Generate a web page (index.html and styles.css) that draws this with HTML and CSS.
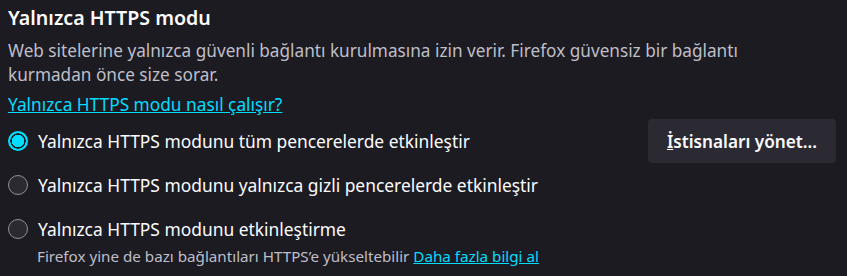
FILE: index.html
```html
<!DOCTYPE html>
<html lang="tr">
  <head>
    <meta charset="UTF-8" />
    <title>Yalnızca HTTPS modu</title>
    <link rel="stylesheet" href="styles.css">
  </head>
  <body>
    <section class="pane">
      <h2 class="title">Yalnızca HTTPS modu</h2>
      <p class="desc">Web sitelerine yalnızca güvenli bağlantı kurulmasına izin verir. Firefox güvensiz bir bağlantı kurmadan önce size sorar.</p>
      <a class="link more" href="#">Yalnızca HTTPS modu nasıl çalışır?</a>

      <div class="options">
        <div class="row">
          <label class="radio">
            <span class="dot checked"></span>
            Yalnızca HTTPS modunu tüm pencerelerde etkinleştir
          </label>
          <button class="btn"><u>İ</u>stisnaları yönet...</button>
        </div>
        <div class="row">
          <label class="radio">
            <span class="dot"></span>
            Yalnızca HTTPS modunu yalnızca gizli pencerelerde etkinleştir
          </label>
        </div>
        <div class="row">
          <label class="radio">
            <span class="dot"></span>
            Yalnızca HTTPS modunu etkinleştirme
          </label>
        </div>
        <div class="note">
          Firefox yine de bazı bağlantıları HTTPS’e yükseltebilir <a class="link" href="#">Daha fazla bilgi al</a>
        </div>
      </div>
    </section>
  </body>
</html>
```

FILE: styles.css
```css
* {
  margin: 0;
  padding: 0;
  box-sizing: border-box;
}

body {
  background: #1c1b22;
  color: #fbfbfe;
  font-family: "Noto Sans", "Open Sans", sans-serif;
  overflow: hidden;
}

.pane {
  padding: 4px 11px 0 8px;
}

.title {
  font-size: 19.6px;
  font-weight: 600;
  line-height: 28px;
}

.desc {
  margin-top: 7px;
  font-size: 17.2px;
  line-height: 24px;
  color: #bfbfc9;
  max-width: 800px;
}

.link {
  color: #00ddff;
}

.more {
  display: block;
  width: max-content;
  margin-top: 5px;
  font-size: 17.3px;
  line-height: 26px;
}

.options {
  margin-top: 1px;
}

.row {
  display: flex;
  align-items: center;
  justify-content: space-between;
  height: 44px;
}

.radio {
  display: flex;
  align-items: center;
  gap: 10px;
  font-size: 17.4px;
}

.dot {
  width: 20px;
  height: 20px;
  border-radius: 50%;
  border: 1px solid #8f8f9d;
  background: #2b2a33;
  flex: none;
}

.dot.checked {
  border: 2px solid #00ddff;
  background: radial-gradient(circle, #00ddff 0 6px, #1c1b22 6.5px 7.5px, #00ddff 8px);
}

.btn {
  font: inherit;
  font-size: 17.2px;
  font-weight: 600;
  color: #fbfbfe;
  background: #2b2a33;
  border: none;
  border-radius: 4px;
  width: 188px;
  height: 44px;
}

.btn u {
  text-decoration-thickness: 1px;
}

.note {
  padding-left: 29px;
  margin-top: -5px;
  font-size: 15.2px;
  color: #bfbfc9;
}
```
